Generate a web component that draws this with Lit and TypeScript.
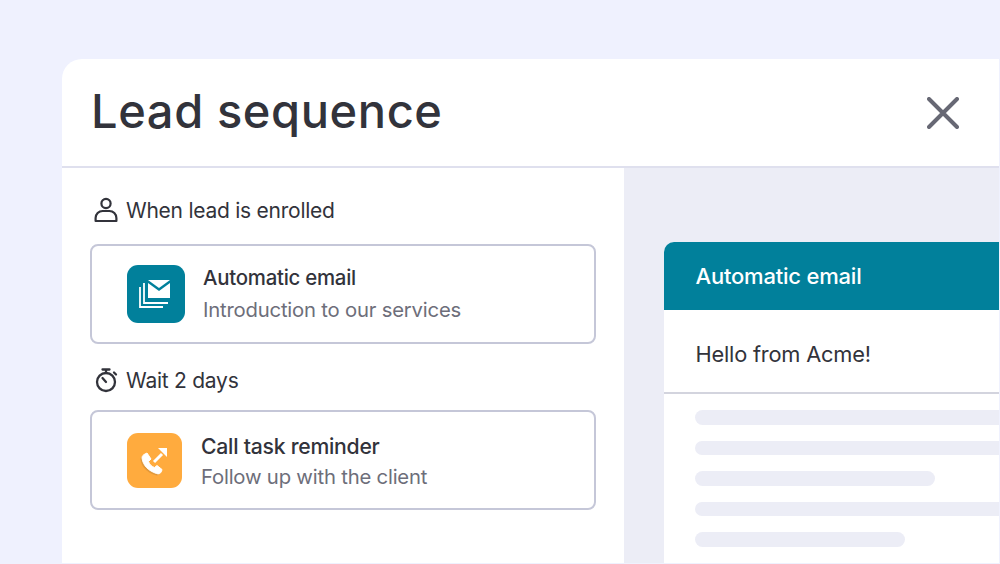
import { LitElement, html, css } from "lit";
import { customElement } from "lit/decorators.js";

@customElement("app-root")
export class AppRoot extends LitElement {
  static styles = css`
    :host { display: block; width: 1000px; height: 564px; overflow: hidden; background: #eff1fe; font-family: "Inter", "Liberation Sans", sans-serif; color: #32333b; }
    .page { padding: 59px 0 1px 62px; height: 564px; box-sizing: border-box; }
    .modal { width: 937px; height: 504px; background: #fff; border-radius: 20px 0 0 0; display: flex; flex-direction: column; overflow: hidden; }
    .head { height: 107px; flex: none; border-bottom: 2px solid #dfe0ee; display: flex; align-items: center; justify-content: space-between; padding: 0 40px 0 29px; }
    h1 { margin: 0; font-size: 47px; font-weight: 500; letter-spacing: 0.6px; color: #32333b; line-height: 1; padding-bottom: 4px; }
    .close { display: block; width: 32px; height: 32px; }
    .body { flex: 1; display: flex; min-height: 0; }
    .left { width: 562px; flex: none; box-sizing: border-box; padding: 27px 28px 0; display: flex; flex-direction: column; }
    .step { display: flex; align-items: center; gap: 7px; height: 30px; padding-left: 3px; font-size: 21px; color: #32333b; letter-spacing: -0.25px; }
    .step svg { width: 26px; height: 26px; flex: none; }
    .card { height: 100px; box-sizing: border-box; border: 2px solid #c5c7d8; border-radius: 8px; display: flex; align-items: center; padding-left: 35px; margin: 19px 0 21px; }
    .card.second { margin-top: 15px; }
    .icon { width: 58px; height: 58px; border-radius: 11px; background: #01809b; flex: none; margin-right: 18px; display: block; }
    .icon.orange { width: 55px; height: 55px; background: #ffab3e; margin-right: 19px; }
    .title { font-size: 20.4px; font-weight: 500; letter-spacing: -0.25px; line-height: 28px; color: #32333b; }
    .second .title { font-size: 21.2px; line-height: 30px; }
    .sub { font-size: 20.3px; letter-spacing: -0.2px; line-height: 30px; margin-top: 3px; color: #6d6e7a; }
    .second .text { padding-top: 3px; }
    .second .sub { margin-top: 1px; }
    .right { flex: 1; background: #ecedf6; padding: 74px 0 0 40px; display: flex; }
    .mail { flex: 1; background: #fff; border-radius: 10px 0 0 0; overflow: hidden; display: flex; flex-direction: column; }
    .mail-head { height: 68px; flex: none; background: #01809b; color: #fff; display: flex; align-items: center; padding-left: 31.5px; font-size: 22px; font-weight: 500; letter-spacing: -0.2px; }
    .subject { height: 84px; flex: none; box-sizing: border-box; border-bottom: 2px solid #d3d4de; display: flex; align-items: center; padding: 5px 0 0 31.5px; font-size: 21.8px; letter-spacing: -0.2px; color: #32333b; }
    .lines { display: flex; flex-direction: column; gap: 16px; padding: 16px 0 0 31px; }
    .line { height: 14.5px; background: #ecedf6; border-radius: 8px; }
  `;

  render() {
    const handset = "M15 25c0-2 1-3 3-4l2-1 4 6-2.500 2.500c1 3 3 5 6 6l2.500-2 5 4-.500 2c-1 2-3 3-5 2C22 38 16 33 15 25z";
    return html`
      <div class="page">
        <div class="modal">
          <div class="head">
            <h1>Lead sequence</h1>
            <svg class="close" viewBox="0 0 32 32" fill="none" stroke="#676874" stroke-width="4" stroke-linecap="round"><path d="M2 2 30 30M30 2 2 30"/></svg>
          </div>
          <div class="body">
            <div class="left">
              <div class="step">
                <svg viewBox="0 0 26 26" fill="none" stroke="#32333b" stroke-width="2.2"><circle cx="13" cy="6.500" r="4.600"/><path d="M2.600 24v-3a7 7 0 0 1 7-7h6.800a7 7 0 0 1 7 7v3z" stroke-linejoin="round"/></svg>
                <span>When lead is enrolled</span>
              </div>
              <div class="card">
                <svg class="icon" viewBox="0 0 58 58">
                  <path d="M13 22v20h23" fill="none" stroke="#fff" stroke-width="1.800"/>
                  <path d="M17 18v20h24" fill="none" stroke="#fff" stroke-width="1.800"/>
                  <path d="M21 15h22l-11 8z" fill="#fff"/>
                  <path d="M21 18v15h22V18l-11 8z" fill="#fff"/>
                </svg>
                <div class="text">
                  <div class="title">Automatic email</div>
                  <div class="sub">Introduction to our services</div>
                </div>
              </div>
              <div class="step">
                <svg viewBox="0 0 26 26" fill="none" stroke="#32333b" stroke-width="2.300" stroke-linecap="round"><circle cx="13" cy="15" r="9"/><path d="M9.500 2.500h7M13 3v3M21 5.500l2 2M9.500 11l3.500 4"/></svg>
                <span>Wait 2 days</span>
              </div>
              <div class="card second">
                <svg class="icon orange" viewBox="0 0 55 55">
                  <path d=${handset} fill="#c98a3a" opacity="0.55" transform="translate(-1.500 1.500)"/>
                  <path d=${handset} fill="#fff" stroke="#fff" stroke-width="1"/>
                  <path d="M27 29l8-8" stroke="#fff" stroke-width="3" fill="none"/>
                  <path d="M31 15h9v9z" fill="#fff"/>
                </svg>
                <div class="text">
                  <div class="title">Call task reminder</div>
                  <div class="sub">Follow up with the client</div>
                </div>
              </div>
            </div>
            <div class="right">
              <div class="mail">
                <div class="mail-head">Automatic email</div>
                <div class="subject">Hello from Acme!</div>
                <div class="lines">
                  ${[400, 400, 240, 400, 210].map((w) => html`<div class="line" style="width:${w}px"></div>`)}
                </div>
              </div>
            </div>
          </div>
        </div>
      </div>
    `;
  }
}
